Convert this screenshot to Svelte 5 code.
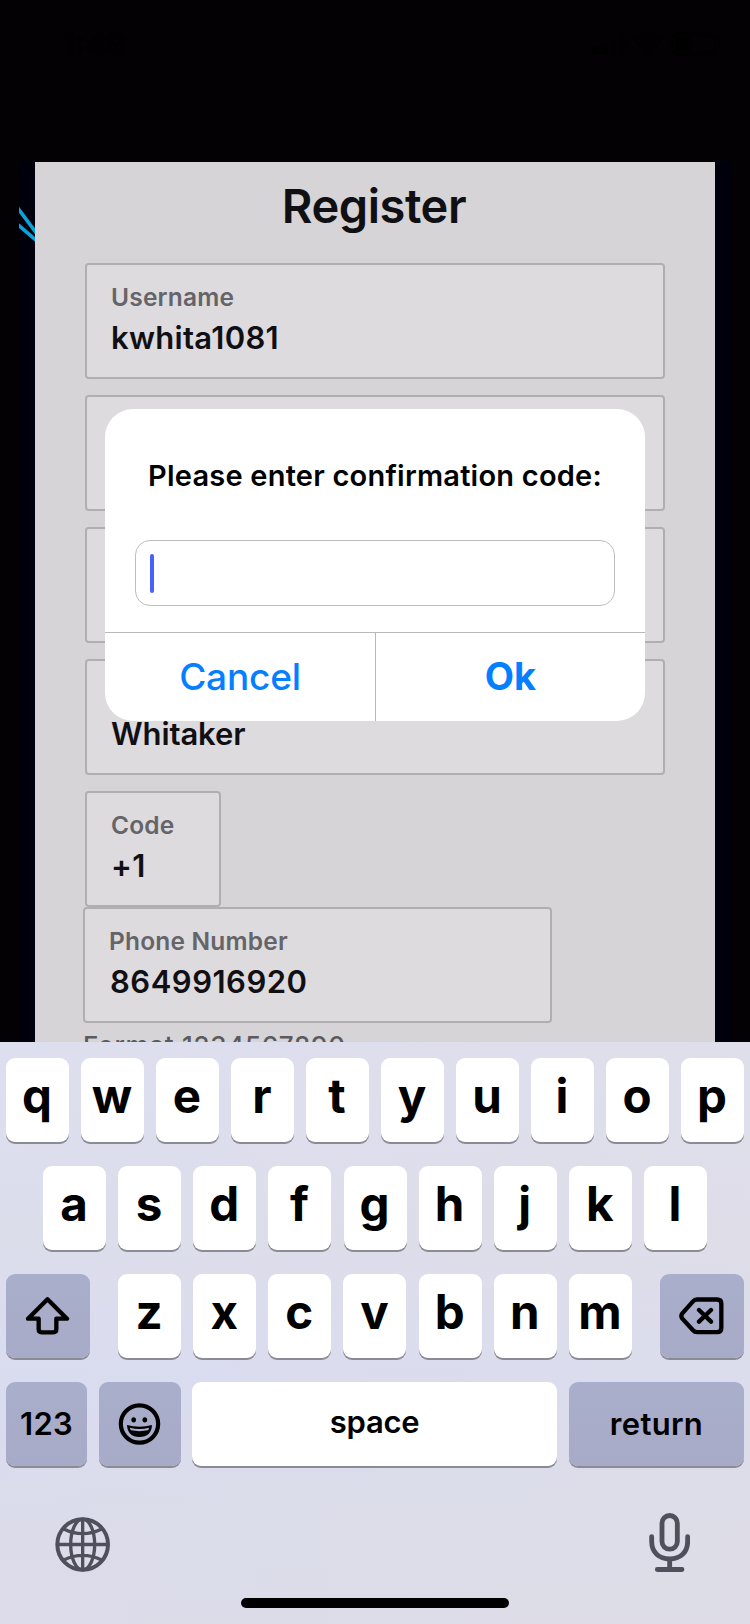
<script>
  const fields = [
    { label: 'Username', value: 'kwhita1081' },
    { label: '', value: '' },
    { label: '', value: '' },
    { label: '', value: 'Whitaker' }
  ];
  const rowOne = [...'qwertyuiop'];
  const rowTwo = [...'asdfghjkl'];
  const rowThree = [...'zxcvbnm'];
</script>

<div class="phone">
  <div class="app">
    <header class="status">
      <span class="clock">1:49</span>
      <svg class="signals" viewBox="0 0 130 24" width="130" height="24">
        <g fill="#000">
          <rect x="1" y="15" width="7" height="8" rx="1.500" />
          <rect x="10" y="11" width="7" height="12" rx="1.500" />
          <rect x="19" y="6" width="6" height="17" rx="1" opacity=".5" />
          <rect x="28" y="1" width="6" height="22" rx="1" opacity=".5" />
          <circle cx="57" cy="19" r="3.500" />
          <rect x="84" y="4" width="16" height="16" rx="3" />
          <rect x="126" y="8" width="3" height="8" rx="1" />
        </g>
        <g fill="none" stroke="#000">
          <path d="M43 8Q57 -3 71 8M48 14Q57 6 66 14" stroke-width="4.500" />
          <rect x="81.500" y="1.500" width="42" height="21" rx="6" stroke-width="2.500" />
        </g>
      </svg>
    </header>

    <main class="backdrop">
      <svg class="streaks" viewBox="0 0 16 40" width="16" height="40">
        <path d="M-2 2L18 29M-2 19L18 36" fill="none" stroke="#08a5dc" stroke-width="3.6" />
      </svg>
      <section class="panel">
        <h1>Register</h1>
        <div class="form">
          {#each fields as f}
            <div class="field">
              <span class="label">{f.label}</span>
              <span class="value" class:surname={f.value === 'Whitaker'}>{f.value}</span>
            </div>
          {/each}
          <div class="field code">
            <span class="label">Code</span>
            <span class="value">+1</span>
          </div>
        </div>
        <div class="phone-group">
          <div class="field">
            <span class="label">Phone Number</span>
            <span class="value digits">8649916920</span>
          </div>
          <p>Format 1234567890</p>
        </div>
      </section>
    </main>
  </div>

  <div class="keyboard">
    <div class="rows">
      <div class="row">
        {#each rowOne as k}<div class="key">{k}</div>{/each}
      </div>
      <div class="row second">
        {#each rowTwo as k}<div class="key">{k}</div>{/each}
      </div>
      <div class="row third">
        <div class="key dark">
          <svg viewBox="75 140 135 118" width="45" height="39.33">
            <path d="M142.500 150L201 208H169V240Q169 249 160 249H125Q116 249 116 240V208H84Z" fill="none" stroke="#000" stroke-width="13" stroke-linejoin="round" />
          </svg>
        </div>
        <div class="letters">
          {#each rowThree as k}<div class="key">{k}</div>{/each}
        </div>
        <div class="key dark">
          <svg viewBox="912 140 138 116" width="46" height="38.67">
            <path d="M966 147.500H1026Q1039 147.500 1039 160V233Q1039 245.500 1026 245.500H966Q959 245.500 954 240L922 205Q916 197 922 189L954 153Q959 147.500 966 147.500ZM972 179L1008 214M1008 179L972 214" fill="none" stroke="#000" stroke-width="13" stroke-linejoin="round" stroke-linecap="round" />
          </svg>
        </div>
      </div>
      <div class="row fourth">
        <div class="key dark word">123</div>
        <div class="key dark">
          <svg viewBox="355 458 128 128" width="42.67" height="42.67">
            <circle cx="419.500" cy="521" r="56" fill="none" stroke="#000" stroke-width="12.500" />
            <ellipse cx="402" cy="508.500" rx="7" ry="8" />
            <ellipse cx="435.500" cy="508.500" rx="7" ry="8" />
            <path d="M382 524Q419 535 457 524Q455 560 419 560Q384 560 382 524Z" />
            <path d="M390.500 532Q419 540 448.500 532Q447 538 444 540Q419 545 395 540Q391.500 538 390.500 532Z" fill="#a9afce" />
          </svg>
        </div>
        <div class="key word space">space</div>
        <div class="key dark word">return</div>
      </div>
    </div>
    <div class="tools">
      <svg class="globe" viewBox="164 111 166 165" width="55.330" height="55">
        <g fill="none" stroke="#4f505c" stroke-width="10">
          <circle cx="247" cy="193.500" r="76" stroke-width="12" />
          <ellipse cx="247" cy="193.500" rx="36" ry="76" />
          <path d="M247 117V270M170 193.500H324M190 147Q247 175 304 147M190 240Q247 212 304 240" />
        </g>
      </svg>
      <svg viewBox="821 99 124 177" width="41.330" height="59">
        <g fill="none" stroke="#4f505c" stroke-width="14.500" stroke-linecap="round">
          <rect x="860" y="106.500" width="46" height="101" rx="23" />
          <path d="M829 170V184C829 219 853 237 883 237S937 219 937 184V170M883 237V266M846 268.500H920" />
        </g>
      </svg>
    </div>
    <div class="home"></div>
  </div>

  <div class="dialog">
    <h2>Please enter confirmation code:</h2>
    <div class="entry"><i></i></div>
    <div class="actions">
      <div class="cancel"><span>Cancel</span></div>
      <div class="ok"><span>Ok</span></div>
    </div>
  </div>
</div>

<style>
  :global(body) {
    margin: 0;
    background: #020003;
  }
  .phone {
    position: relative;
    width: 750px;
    height: 1624px;
    overflow: hidden;
    box-sizing: border-box;
    font-family: Inter, 'Liberation Sans', sans-serif;
    background: #030104;
  }
  .app {
    height: 1042px;
    overflow: hidden;
    display: flex;
    flex-direction: column;
  }
  .status {
    flex: none;
    height: 162px;
    box-sizing: border-box;
    padding: 26px 29px 0 62px;
    display: flex;
    justify-content: space-between;
    align-items: flex-start;
  }
  .clock {
    font-size: 31px;
    line-height: 36px;
    font-weight: 700;
    color: #000;
  }
  .signals {
    margin-top: 6px;
  }
  .backdrop {
    flex: 1;
    min-height: 0;
    margin: 0 19px;
    display: flex;
    background: #00000c;
  }
  .streaks {
    flex: none;
    margin-top: 43px;
  }
  .panel {
    width: 680px;
    box-sizing: border-box;
    padding: 14px 50px 0;
    background: #d6d4d7;
    color: #101014;
  }
  h1 {
    margin: 0 0 27px;
    text-align: center;
    font-size: 47px;
    line-height: 60px;
    font-weight: 600;
    letter-spacing: -0.45px;
    text-indent: -2px;
  }
  .form {
    display: flex;
    flex-direction: column;
    gap: 16px;
  }
  .field {
    height: 116px;
    box-sizing: border-box;
    border: 2px solid #b0aeb1;
    border-radius: 4px;
    background: #dddbde;
    padding: 17px 24px 0;
    display: flex;
    flex-direction: column;
    gap: 6px;
  }
  .code {
    width: 136px;
  }
  .label {
    height: 30px;
    font-size: 24.5px;
    line-height: 30px;
    font-weight: 600;
    letter-spacing: 0.2px;
    color: #656468;
  }
  .value {
    font-size: 31px;
    line-height: 40px;
    font-weight: 600;
    letter-spacing: 0.3px;
  }
  .surname {
    letter-spacing: -0.1px;
  }
  .digits {
    letter-spacing: 0.5px;
    margin-left: 1px;
  }
  .phone-group {
    margin-left: -2px;
    width: 469px;
  }
  p {
    margin: 8px 0 0;
    font-size: 26px;
    line-height: 30px;
    font-weight: 500;
    letter-spacing: 0.7px;
    color: #5b5a5e;
    white-space: nowrap;
  }
  .keyboard {
    height: 582px;
    box-sizing: border-box;
    padding: 16px 6px 0;
    background: linear-gradient(90deg, rgba(219, 221, 240, 0.4), rgba(224, 222, 232, 0.4)),
      linear-gradient(#dedfee, #dddde9 36%, #d8dbf0 58%, #dbdce8 80%, #dcdbe6);
    color: #000;
  }
  .rows {
    display: flex;
    flex-direction: column;
    gap: 24px;
  }
  .row,
  .letters {
    display: flex;
    justify-content: space-between;
  }
  .second {
    padding: 0 37px;
  }
  .letters {
    width: 514px;
  }
  .key {
    width: 63px;
    height: 84px;
    box-sizing: border-box;
    padding: 0 1px 9px 0;
    display: flex;
    align-items: center;
    justify-content: center;
    border-radius: 9px;
    background: #fff;
    box-shadow: 0 2px 0 #8c8b95;
    font-size: 47.5px;
    font-weight: 700;
  }
  .dark {
    width: 84px;
    padding-bottom: 0;
    background: linear-gradient(#a8aecb, #a8abc8);
  }
  .word {
    font-size: 31px;
    font-weight: 600;
    padding: 0 0 2px;
    letter-spacing: 0.3px;
  }
  .fourth {
    display: grid;
    grid-template-columns: 81px 82px 364px 175px;
    column-gap: 12px;
    justify-content: start;
  }
  .fourth .key {
    width: auto;
  }
  .fourth .space {
    margin-left: -1px;
    padding-bottom: 6px;
    letter-spacing: -0.3px;
  }
  .tools {
    margin-top: 47px;
    padding: 0 54px 0 48.5px;
    height: 59px;
    display: flex;
    justify-content: space-between;
    align-items: center;
  }
  .globe {
    margin-top: 4px;
  }
  .home {
    width: 268px;
    height: 10px;
    margin: 26px auto 0;
    border-radius: 5px;
    background: #000;
  }
  .dialog {
    position: absolute;
    left: 105px;
    top: 409px;
    width: 540px;
    height: 312px;
    box-sizing: border-box;
    padding-top: 49px;
    border-radius: 28px;
    overflow: hidden;
    background: #fff;
    color: #000;
  }
  h2 {
    margin: 0 0 46px;
    text-align: center;
    font-size: 29px;
    line-height: 36px;
    font-weight: 600;
    letter-spacing: 0.22px;
    white-space: nowrap;
  }
  .entry {
    height: 66px;
    margin: 0 30px 26px;
    box-sizing: border-box;
    border: 1.5px solid #bdbdbf;
    border-radius: 15px;
    padding-left: 14px;
    display: flex;
    align-items: center;
  }
  .entry i {
    width: 4px;
    height: 39px;
    border-radius: 2px;
    background: #4a60fb;
  }
  .actions {
    height: 89px;
    box-sizing: border-box;
    border-top: 1px solid #b9b9bb;
    display: grid;
    grid-template-columns: 271px 269px;
    text-align: center;
    font-size: 37px;
    line-height: 87px;
    color: #057fff;
  }
  .cancel {
    border-right: 1px solid #b9b9bb;
    font-weight: 500;
    letter-spacing: -0.2px;
  }
  .ok {
    font-size: 38px;
    font-weight: 700;
  }
</style>
